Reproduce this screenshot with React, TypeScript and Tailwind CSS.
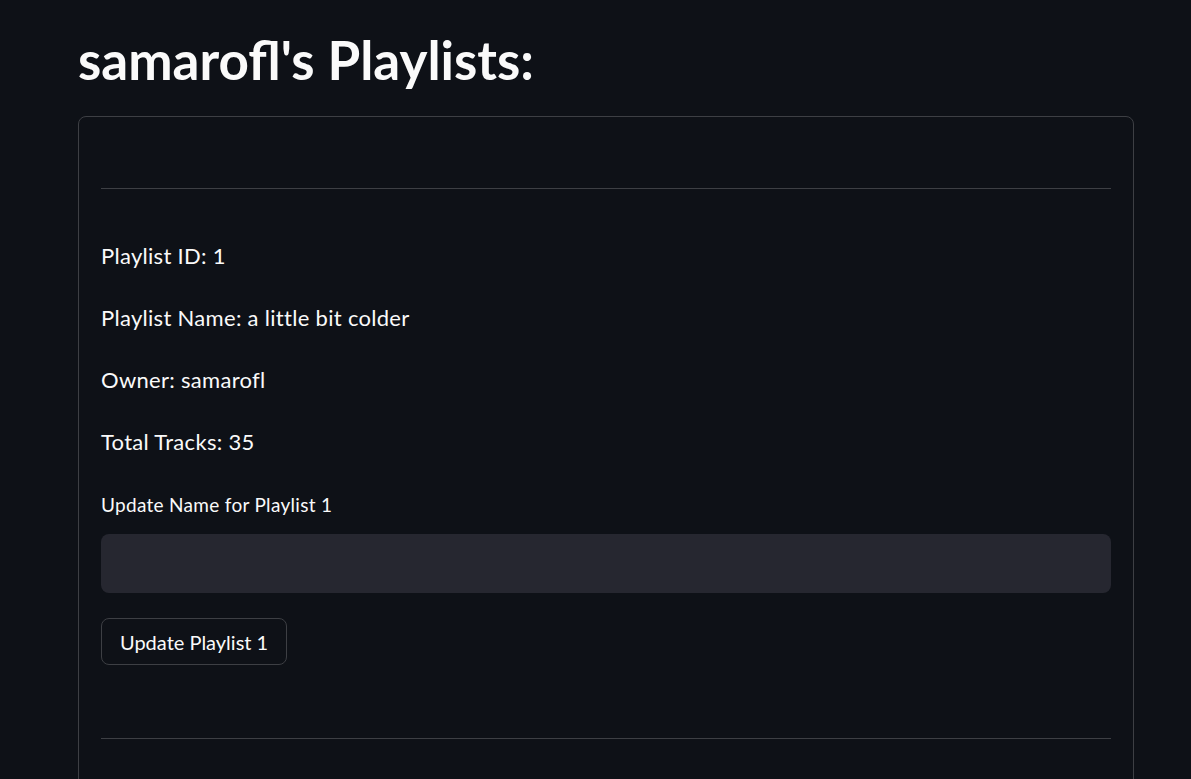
import React from "react";

export default function App() {
  return (
    <div className="w-full bg-[#0e1117] text-[#fafafa] font-['Lato',sans-serif] overflow-hidden h-[779px]">
      <div className="pl-[78px] pr-[57px] pt-[22px]">
        <h1 className="text-[53px] font-bold leading-[76px] h-[76px] whitespace-nowrap">samarofl's Playlists:</h1>
        <div className="mt-[18px] border border-[#3d3f44] rounded-lg px-[22px] pt-[71px] h-[700px]">
          <div className="h-px bg-[#3d3f44]" />
          <div className="mt-[52px] text-[22px] leading-[30px] tracking-[0.3px]">
            <p className="h-[30px] mb-[32px]">Playlist ID: 1</p>
            <p className="h-[30px] mb-[32px]">Playlist Name: a little bit colder</p>
            <p className="h-[30px] mb-[32px]">Owner: samarofl</p>
            <p className="h-[30px]">Total Tracks: 35</p>
          </div>
          <label className="block mt-[33px] text-[19px] leading-[30px] h-[30px] tracking-[0.3px]">Update Name for Playlist 1</label>
          <input className="block mt-[14px] w-full h-[59px] rounded-lg bg-[#262730] outline-none px-4 text-[20px]" />
          <button className="mt-[25px] h-[47px] px-[18px] border border-[#3d3f44] rounded-lg bg-[#0e1117] text-[20px] leading-none">Update Playlist 1</button>
          <div className="mt-[73px] h-px bg-[#3d3f44]" />
        </div>
      </div>
    </div>
  );
}
